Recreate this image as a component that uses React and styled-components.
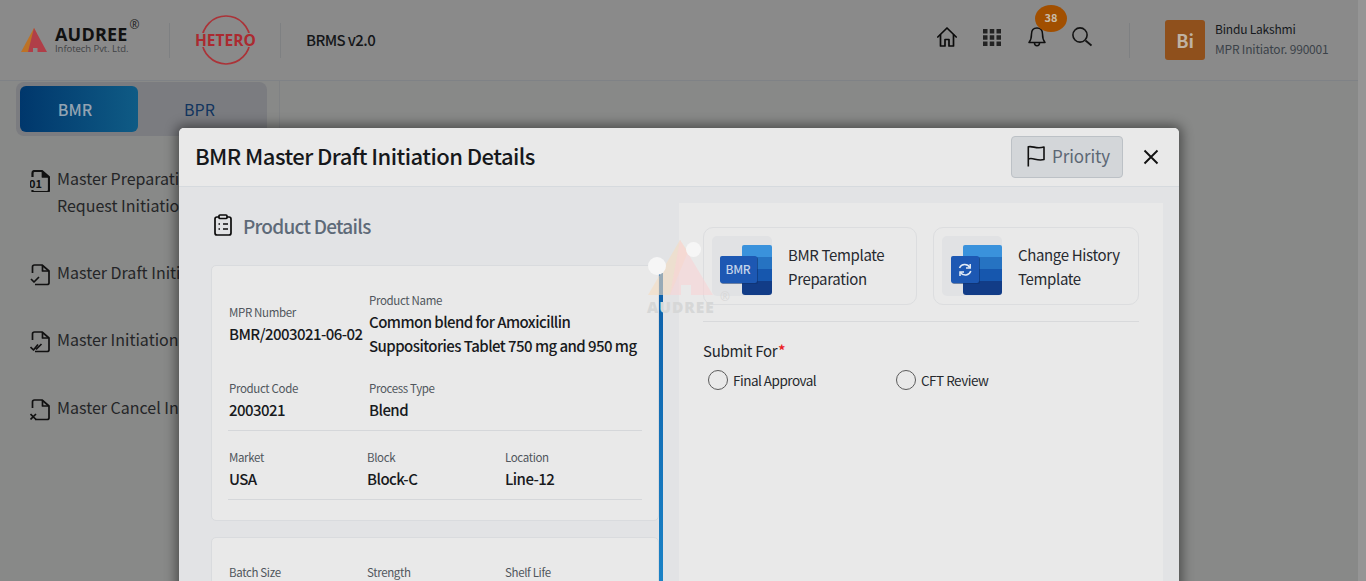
import React from 'react'
import styled, { createGlobalStyle } from 'styled-components'

const FONT = '"Noto Sans CJK SC", "Noto Sans", sans-serif'

const GlobalStyle = createGlobalStyle`
  html, body {
    margin: 0;
    padding: 0;
    height: 100%;
    overflow: hidden;
    background: #888a88;
    font-family: ${FONT};
  }
  * { box-sizing: border-box; }
`

const Page = styled.div`
  position: relative;
  width: 1366px;
  height: 581px;
  overflow: hidden;
  background: #888988;
`

const ScrollTrack = styled.div`
  position: absolute;
  top: 0;
  right: 0;
  bottom: 0;
  width: 8px;
  background: #959595;
`

const Header = styled.header`
  display: flex;
  align-items: center;
  height: 81px;
  padding: 0 37px 0 21px;
  border-bottom: 1px solid #7f8286;
  background: #8a8a8a;
`

const AudreeLogo = styled.div`
  display: flex;
  align-items: center;
  gap: 8px;
  width: 148px;
`

const AudreeText = styled.div`
  position: relative;
  display: flex;
  flex-direction: column;
`

const AudreeName = styled.span`
  font: 700 18px/17px "Open Sans", sans-serif;
  letter-spacing: 0.2px;
  color: #111;
`

const AudreeSub = styled.span`
  font: 400 9.5px/12px "Open Sans", sans-serif;
  letter-spacing: -0.05px;
  color: #3f4245;
`

const Registered = styled.span`
  position: absolute;
  top: -8px;
  left: 100%;
  margin-left: 1px;
  font: 400 12px/14px "Open Sans", sans-serif;
  color: #222;
`

const HeaderRule = styled.div`
  width: 1px;
  height: 35px;
  background: #7e8082;
`

const HeteroLogo = styled.svg`
  display: block;
  margin: 0 23px 0 25px;
`

const AppTitle = styled.div`
  margin: 0 0 2px 25px;
  font-size: 15px;
  font-weight: 500;
  letter-spacing: -0.6px;
  color: #141619;
`

const HeaderIcons = styled.nav`
  display: flex;
  align-items: center;
  margin-left: auto;
  margin-bottom: 6px;
`

const IconSlot = styled.span`
  position: relative;
  display: flex;
  margin-left: ${p => p.$gap || 0}px;
`

const Badge = styled.span`
  position: absolute;
  top: -22px;
  left: 7px;
  width: 32px;
  height: 27px;
  border-radius: 50%;
  background: #a14f00;
  color: #c9bca8;
  font-size: 11px;
  font-weight: 700;
  line-height: 25px;
  text-align: center;
`

const UserBlock = styled.div`
  display: flex;
  align-items: center;
  margin-left: 37px;
  padding-left: 35px;
  height: 35px;
  border-left: 1px solid #7e8082;
`

const Avatar = styled.div`
  display: flex;
  flex: none;
  align-items: center;
  justify-content: center;
  width: 40px;
  height: 40px;
  margin-right: 10px;
  border-radius: 3px;
  background: #8f501c;
  color: #bfb2a3;
  font-size: 18px;
  font-weight: 700;
`

const UserInfo = styled.div`
  width: 114px;
  margin-bottom: 2px;
  white-space: nowrap;
`

const UserName = styled.div`
  font-size: 12px;
  line-height: 20px;
  letter-spacing: -0.2px;
  color: #15181c;
`

const UserRole = styled.div`
  font-size: 12px;
  line-height: 20px;
  letter-spacing: -0.2px;
  color: #3b4249;
`

const Body = styled.div`
  display: flex;
  height: 500px;
`

const Sidebar = styled.aside`
  width: 280px;
  padding: 1px 12px 0 16px;
  border-right: 1px solid #808284;
`

const Tabs = styled.div`
  display: flex;
  width: 251px;
  height: 54px;
  padding: 4px;
  border-radius: 8px;
  background: #7b7c80;
`

const Tab = styled.div`
  display: flex;
  flex: 0 0 ${p => (p.$active ? '118px' : '123px')};
  align-items: center;
  justify-content: center;
  padding-right: ${p => (p.$active ? '8px' : '0')};
  border-radius: 6px;
  font-size: 16px;
  font-weight: ${p => (p.$active ? 500 : 400)};
  background: ${p => (p.$active ? 'linear-gradient(90deg, #00376c, #0f5b85)' : 'transparent')};
  color: ${p => (p.$active ? '#93a3b2' : '#12355f')};
`

const NavList = styled.ul`
  display: flex;
  flex-direction: column;
  gap: 40.4px;
  margin: 28.6px 0 0;
  padding: 0 0 0 14px;
  list-style: none;
`

const NavItem = styled.li`
  display: flex;
  align-items: flex-start;
  gap: 7px;
  font-size: 16px;
  line-height: 27px;
  white-space: nowrap;
  color: #242527;
`

const NavIcon = styled.svg`
  flex: none;
  margin-top: 5px;
`

const Modal = styled.section`
  position: absolute;
  top: 128px;
  left: 179px;
  width: 1000px;
  height: 470px;
  border-radius: 5px 5px 0 0;
  background: #e2e3e5;
  box-shadow: 0 0 12px 3px rgba(0, 0, 0, 0.45);
`

const ModalHeader = styled.div`
  display: flex;
  align-items: center;
  height: 59px;
  padding: 0 20px 1px 16px;
  border-radius: 5px 5px 0 0;
  border-bottom: 1px solid #d6dade;
  background: #e9e9e9;
`

const ModalTitle = styled.h2`
  margin: 0 0 3px;
  font-size: 22px;
  font-weight: 500;
  letter-spacing: -0.55px;
  color: #16181b;
`

const PriorityButton = styled.button`
  display: flex;
  align-items: center;
  gap: 7px;
  width: 112px;
  height: 42px;
  margin-left: auto;
  padding: 0 0 2px 15px;
  border: 1px solid #bcc1c6;
  border-radius: 4px;
  background: #d3d6d9;
  color: #5c6774;
  font-family: ${FONT};
  font-size: 17px;
  letter-spacing: -0.1px;
`

const CloseButton = styled.button`
  display: flex;
  margin-left: 20px;
  padding: 0;
  border: 0;
  background: none;
`

const ModalBody = styled.div`
  display: flex;
  padding-top: 16px;
`

const LeftColumn = styled.div`
  position: relative;
  width: 500px;
  padding: 6px 20px 0 32px;
`

const SectionTitle = styled.div`
  display: flex;
  align-items: center;
  gap: 11px;
  height: 32px;
  margin: 0 0 24px;
  padding-left: 3px;
  font-size: 19px;
  font-weight: 500;
  letter-spacing: -0.75px;
  color: #5e6a78;
`

const InfoCard = styled.div`
  width: 448px;
  margin-bottom: 16px;
  padding: 24px 16px 20px;
  border: 1px solid #d9dbde;
  border-radius: 5px;
  background: #e9e9e9;
`

const InfoRow = styled.div`
  display: grid;
  grid-template-columns: ${p => p.$cols || '140px 1fr'};
  align-items: center;
  padding-bottom: ${p => p.$pad || 8}px;
  border-bottom: ${p => (p.$line ? '1px solid #d5d7da' : 'none')};
  margin-bottom: ${p => p.$gap || 0}px;
`

const Field = styled.div`
  padding-left: 1px;
`

const Label = styled.div`
  font-size: 11.5px;
  line-height: 20px;
  letter-spacing: -0.35px;
  color: #50565c;
`

const Value = styled.div`
  font-size: 15px;
  font-weight: 500;
  line-height: 24px;
  letter-spacing: -0.55px;
  color: #181a1d;
`

const ScrollThumb = styled.div`
  position: absolute;
  top: 62px;
  left: 480px;
  width: 4px;
  height: 420px;
  background: linear-gradient(180deg, #0c5ea8, #1f8ed0);
`

const RightPanel = styled.div`
  width: 484px;
  min-height: 400px;
  padding: 24px 24px 0;
  background: #e9e9e9;
`

const TemplateRow = styled.div`
  display: flex;
  gap: 16px;
  width: 436px;
  padding-bottom: 16px;
  border-bottom: 1px solid #d8d9db;
`

const TemplateCard = styled.div`
  display: flex;
  align-items: center;
  gap: 16px;
  width: ${p => p.$w}px;
  height: 78px;
  padding: 0 8px;
  border: 1px solid #dcdddf;
  border-radius: 10px;
  font-size: 15px;
  line-height: 24px;
  letter-spacing: -0.35px;
  color: #272a30;
`

const CardText = styled.span`
  padding-top: 1px;
`

const IconTile = styled.div`
  display: flex;
  flex: none;
  width: 60px;
  height: 60px;
  border-radius: 5px;
  background: #e1e2e4;
`

const SubmitLabel = styled.div`
  margin-top: 16px;
  font-size: 15px;
  line-height: 24px;
  letter-spacing: -0.3px;
  color: #23262b;
`

const Required = styled.span`
  margin-left: 1px;
  color: #ec1c24;
  font-size: 14px;
  font-weight: 700;
  vertical-align: 1px;
`

const RadioRow = styled.div`
  display: flex;
  padding: 6px 0 0 5px;
`

const RadioOption = styled.label`
  display: flex;
  align-items: center;
  gap: 5px;
  width: ${p => p.$w}px;
  font-size: 13.5px;
  line-height: 20px;
  letter-spacing: -0.5px;
  color: #26292e;
`

const RadioText = styled.span`
  padding-top: 1px;
`

const RadioDot = styled.span`
  flex: none;
  width: 20px;
  height: 20px;
  border: 1px solid #5b5b5b;
  border-radius: 50%;
`

const Loader = styled.div`
  position: absolute;
  top: 236px;
  left: 644px;
  width: 92px;
  height: 84px;
  pointer-events: none;
`

const LoaderDot = styled.span`
  position: absolute;
  top: ${p => p.$y}px;
  left: ${p => p.$x}px;
  width: ${p => p.$s}px;
  height: ${p => p.$s}px;
  border-radius: 50%;
  background: #f6f6f6;
`

const LoaderText = styled.span`
  position: absolute;
  top: 62px;
  left: 3px;
  font: 800 15.5px/18px "Open Sans", sans-serif;
  letter-spacing: 1px;
  color: #d6d7d7;
`

const LoaderMark = styled.svg`
  position: absolute;
  top: 4px;
  left: 4px;
`

const LoaderReg = styled.span`
  position: absolute;
  top: 54px;
  left: 76px;
  font: 400 12px/14px "Open Sans", sans-serif;
  color: #d8d8d8;
`

const Mark = () => (
  <svg width="26" height="24" viewBox="0 0 26 24">
    <path d="M13 0 L0 24 H7 L16 6 Z" fill="#bd7226" />
    <path d="M13 0 L26 24 H16.5 V20 H12 V24 H7 Z" fill="#b03e48" />
  </svg>
)

const Home = () => (
  <svg width="20" height="20" viewBox="0 0 20 20" fill="none" stroke="#0b0b0b" strokeWidth="1.7" strokeLinejoin="round">
    <path d="M0.8 10 L10 1 L19.2 10" strokeLinecap="round" />
    <path d="M3.5 7.5 V19 H8 V12.5 H12 V19 H16.5 V7.5" />
  </svg>
)

const Apps = () => (
  <svg width="18" height="17" viewBox="0 0 18 17" fill="#232323">
    {[0, 6.25, 12.5].flatMap(y =>
      [0, 6.75, 13.5].map(x => <rect key={`${x}-${y}`} x={x} y={y} width="4.5" height="4.5" />)
    )}
  </svg>
)

const Bell = () => (
  <svg width="18" height="20" viewBox="0 0 18 20" fill="none" stroke="#0f0f0f" strokeWidth="1.5" strokeLinejoin="round">
    <path d="M9 1 C5 1 3.5 4 3.5 7 C3.5 11 3 13 1 15.5 H17 C15 13 14.5 11 14.5 7 C14.5 4 13 1 9 1 Z" />
    <path d="M6.5 16 C6.5 19.5 11.5 19.5 11.5 16" />
  </svg>
)

const Search = () => (
  <svg width="20" height="20" viewBox="0 0 20 20" fill="none" stroke="#141414" strokeWidth="1.6">
    <circle cx="8" cy="8" r="7.1" />
    <path d="M13.5 13.5 L19.5 18.5" strokeWidth="1.9" />
  </svg>
)

const Flag = () => (
  <svg width="18" height="22" viewBox="0 0 18 22" fill="none" stroke="#111" strokeWidth="1.6" strokeLinejoin="round">
    <path d="M1.3 21.5 V1.8 C6 0.5 9 4.5 17 2 V14.5 C10 16.5 6 12 1.3 14" />
  </svg>
)

const Close = () => (
  <svg width="16" height="16" viewBox="0 0 16 16" stroke="#111" strokeWidth="1.9">
    <path d="M1.5 1.5 L14.5 14.5 M14.5 1.5 L1.5 14.5" />
  </svg>
)

const Clipboard = () => (
  <svg width="18" height="22" viewBox="0 0 18 22" fill="none" stroke="#0c0c0c" strokeWidth="1.7" strokeLinejoin="round">
    <rect x="1" y="3" width="16" height="18" rx="2" />
    <rect x="5" y="1" width="8" height="3.5" rx="1" fill="#e2e3e5" />
    <path d="M4.5 10 H6 M9 10 H14 M4.5 15 H6 M9 15 H14" />
  </svg>
)

const DocIcon = ({ kind }) => (
  <NavIcon width="20" height="22" viewBox="0 0 20 22" fill="none" stroke="#111" strokeWidth="1.7" strokeLinejoin="round">
    {kind === 'number' ? (
      <>
        <path d="M2.5 7 V3 Q2.5 1 4.5 1 H12 L19 7 V20 Q19 22 17 22 H2.5 V20" strokeWidth="2.2" />
        <path d="M12.5 1.5 V7 H18.5" fill="#111" />
        <text x="-1" y="17.5" fill="#111" stroke="none" fontSize="11" fontWeight="700" fontFamily={FONT}>01</text>
      </>
    ) : (
      <>
        <path d="M2.5 9 V3 Q2.5 1 4.5 1 H12 L19 7 V19 Q19 20.5 17 20.5 H5" />
        <path d="M12.5 1.5 V7 H18.5" />
        {kind === 'check' && <path d="M1 15 L4 18 L9 13" />}
        {kind === 'double' && <path d="M0.5 16 L3.5 19 L8 13.5 M6 18.5 L11.5 13" />}
        {kind === 'cross' && <path d="M0.5 15 L6 20.5 M6 15 L0.5 20.5" />}
      </>
    )}
  </NavIcon>
)

const WordIcon = ({ stackX, frontX, frontW, children }) => (
  <svg width="60" height="60" viewBox="0 0 60 60">
    <path d={`M${stackX} 11 Q${stackX} 9 ${stackX + 2} 9 H58 Q60 9 60 11 V22 H${stackX} Z`} fill="#3a92dc" />
    <rect x={stackX} y="21" width={60 - stackX} height="13" fill="#2673c2" />
    <rect x={stackX} y="33" width={60 - stackX} height="12" fill="#1657ae" />
    <path d={`M${stackX} 45 H60 V56 Q60 59 57 59 H${stackX + 3} Q${stackX} 59 ${stackX} 56 Z`} fill="#123c87" />
    <rect x={frontX + 1} y="21" width={frontW} height="27" rx="2" fill="#0f2f6a" opacity="0.55" />
    <rect x={frontX} y="20" width={frontW} height="27" rx="2" fill="#1d58b3" />
    {children}
  </svg>
)

function App() {
  return (
    <Page>
      <GlobalStyle />
      <Header>
        <AudreeLogo>
          <Mark />
          <AudreeText>
            <AudreeName>AUDREE</AudreeName>
            <AudreeSub>Infotech Pvt. Ltd.</AudreeSub>
            <Registered>®</Registered>
          </AudreeText>
        </AudreeLogo>
        <HeaderRule />
        <HeteroLogo width="62" height="52" viewBox="0 0 62 52">
          <circle cx="31" cy="26" r="24" fill="none" stroke="#ab3338" strokeWidth="1.7" />
          <rect x="0" y="19" width="62" height="14" fill="#8a8a8a" />
          <text x="0" y="31.5" fill="#ab2a30" fontSize="15.5" fontWeight="700" fontFamily={'"Open Sans", sans-serif'}>HETERO</text>
        </HeteroLogo>
        <HeaderRule />
        <AppTitle>BRMS v2.0</AppTitle>
        <HeaderIcons>
          <IconSlot><Home /></IconSlot>
          <IconSlot $gap={26}><Apps /></IconSlot>
          <IconSlot $gap={27}>
            <Bell />
            <Badge>38</Badge>
          </IconSlot>
          <IconSlot $gap={26}><Search /></IconSlot>
        </HeaderIcons>
        <UserBlock>
          <Avatar>Bi</Avatar>
          <UserInfo>
            <UserName>Bindu Lakshmi</UserName>
            <UserRole>MPR Initiator. 990001</UserRole>
          </UserInfo>
        </UserBlock>
      </Header>
      <Body>
        <Sidebar>
          <Tabs>
            <Tab $active>BMR</Tab>
            <Tab>BPR</Tab>
          </Tabs>
          <NavList>
            <NavItem><DocIcon kind="number" /><span>Master Preparation<br />Request Initiation</span></NavItem>
            <NavItem><DocIcon kind="check" /><span>Master Draft Initiation</span></NavItem>
            <NavItem><DocIcon kind="double" /><span>Master Initiation Details</span></NavItem>
            <NavItem><DocIcon kind="cross" /><span>Master Cancel Initiation</span></NavItem>
          </NavList>
        </Sidebar>
      </Body>
      <ScrollTrack />
      <Modal>
        <ModalHeader>
          <ModalTitle>BMR Master Draft Initiation Details</ModalTitle>
          <PriorityButton><Flag />Priority</PriorityButton>
          <CloseButton><Close /></CloseButton>
        </ModalHeader>
        <ModalBody>
          <LeftColumn>
            <SectionTitle><Clipboard />Product Details</SectionTitle>
            <InfoCard>
              <InfoRow $pad={20}>
                <Field>
                  <Label>MPR Number</Label>
                  <Value>BMR/2003021-06-02</Value>
                </Field>
                <Field>
                  <Label>Product Name</Label>
                  <Value>Common blend for Amoxicillin Suppositories Tablet 750 mg and 950 mg</Value>
                </Field>
              </InfoRow>
              <InfoRow $line $gap={16}>
                <Field>
                  <Label>Product Code</Label>
                  <Value>2003021</Value>
                </Field>
                <Field>
                  <Label>Process Type</Label>
                  <Value>Blend</Value>
                </Field>
              </InfoRow>
              <InfoRow $line $cols="138px 138px 1fr">
                <Field>
                  <Label>Market</Label>
                  <Value>USA</Value>
                </Field>
                <Field>
                  <Label>Block</Label>
                  <Value>Block-C</Value>
                </Field>
                <Field>
                  <Label>Location</Label>
                  <Value>Line-12</Value>
                </Field>
              </InfoRow>
            </InfoCard>
            <InfoCard>
              <InfoRow $cols="138px 138px 1fr">
                <Field><Label>Batch Size</Label></Field>
                <Field><Label>Strength</Label></Field>
                <Field><Label>Shelf Life</Label></Field>
              </InfoRow>
            </InfoCard>
            <ScrollThumb />
          </LeftColumn>
          <RightPanel>
            <TemplateRow>
              <TemplateCard $w={214}>
                <IconTile>
                  <WordIcon stackX={30} frontX={8} frontW={37}>
                    <text x="13.5" y="38" fill="#c3d3ea" fontSize="12" fontWeight="500" fontFamily={FONT}>BMR</text>
                  </WordIcon>
                </IconTile>
                <CardText>BMR Template Preparation</CardText>
              </TemplateCard>
              <TemplateCard $w={206}>
                <IconTile>
                  <WordIcon stackX={21} frontX={9} frontW={28}>
                    <g fill="none" stroke="#e4ecf6" strokeWidth="1.5">
                      <path d="M17.5 32 A5.8 5.8 0 0 1 27.8 31.5 M28.8 35 A5.8 5.8 0 0 1 18.5 36.5" />
                      <path d="M28.2 28 V32 H24 M18 40 V36 H22" />
                    </g>
                  </WordIcon>
                </IconTile>
                <CardText>Change History Template</CardText>
              </TemplateCard>
            </TemplateRow>
            <SubmitLabel>Submit For<Required>*</Required></SubmitLabel>
            <RadioRow>
              <RadioOption $w={188}><RadioDot /><RadioText>Final Approval</RadioText></RadioOption>
              <RadioOption $w={120}><RadioDot /><RadioText>CFT Review</RadioText></RadioOption>
            </RadioRow>
          </RightPanel>
        </ModalBody>
      </Modal>
      <Loader>
        <LoaderMark width="66" height="56" viewBox="0 0 66 56">
          <path d="M32 0 L0 55 H22 L40 12 Z" fill="#f5dcc0" opacity="0.6" />
          <path d="M32 0 L65 55 H43 V45 H33 V55 H22 Z" fill="#f8d3d6" opacity="0.6" />
        </LoaderMark>
        <LoaderDot $x={4} $y={21} $s={18} />
        <LoaderDot $x={42} $y={6} $s={15} />
        <LoaderText>AUDREE</LoaderText>
        <LoaderReg>®</LoaderReg>
      </Loader>
    </Page>
  )
}

export default App
